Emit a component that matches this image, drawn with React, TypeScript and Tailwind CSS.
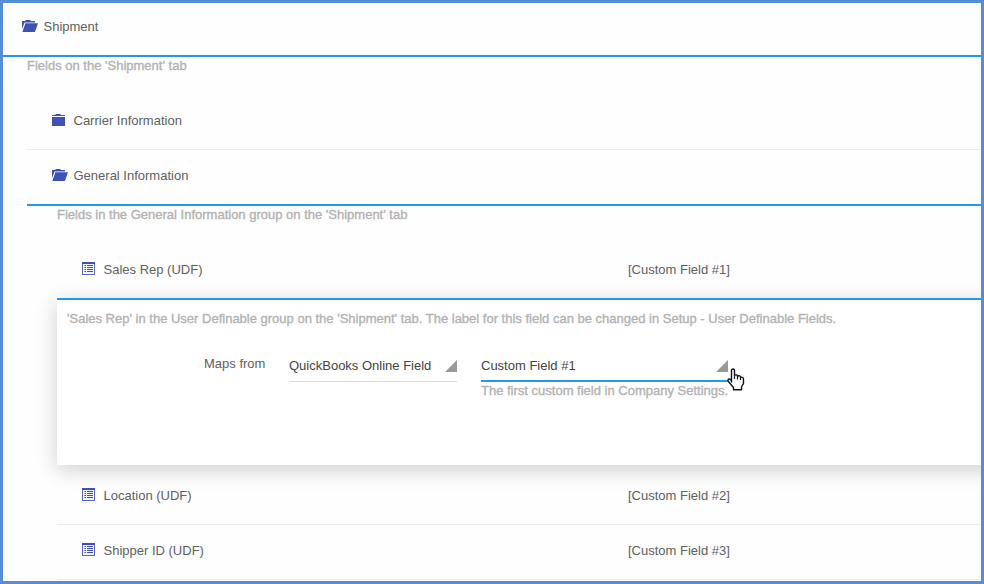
import React from "react";

function FolderOpen() {
  return (
    <svg width="16" height="12" viewBox="0 0 16 12" className="shrink-0" fill="#3f51b5">
      <path d="M0 1H3L4 0H8L9 1H13V2.4H2.6L0 9Z" />
      <path d="M3.4 3.2H16L12.9 12H0.4Z" />
    </svg>
  );
}

function FolderClosed() {
  return (
    <svg width="13" height="12" viewBox="0 0 13 12" className="shrink-0" fill="#3f51b5">
      <path d="M0 1H3L4 0H8L9 1H13V2H0Z" />
      <path d="M0 3H13V12H0Z" />
    </svg>
  );
}

function ListIcon() {
  return (
    <svg width="13" height="13" viewBox="0 0 13 13" className="shrink-0">
      <path d="M0 0H13V13H0Z" fill="#5b6bc3" />
      <path d="M0 0H13V2H0Z" fill="#3f51b5" />
      <path d="M1 2H12V12H1Z" fill="#f1f3fb" />
      <path d="M2.5 3.5H4M5 3.5H11M2.5 5.5H4M5 5.5H11M2.5 7.5H4M5 7.5H11M2.5 9.5H4M5 9.5H11" stroke="#3f51b5" strokeWidth="1" />
    </svg>
  );
}

function FieldRow({ label, value, className }: { label: string; value: string; className: string }) {
  return (
    <div className={`flex items-center pl-[25px] ${className}`}>
      <ListIcon />
      <span className="ml-[8.5px] w-[524.5px] pt-[3px]">{label}</span>
      <span className="pt-[3px]">{value}</span>
    </div>
  );
}

function Corner() {
  return (
    <svg width="12" height="12" viewBox="0 0 12 12" className="shrink-0">
      <path d="M12 0V12H0Z" fill="#999" />
    </svg>
  );
}

function Hand() {
  return (
    <svg width="18" height="23" viewBox="0 0 18 23" className="absolute left-[246px] top-[10px]">
      <path
        d="M4.5 14.5V2.6Q4.5 1 6 1Q7.5 1 7.5 2.6V7.2Q10.2 6.2 10.6 8Q13.2 7.2 13.6 9.2Q16.5 8.7 16.5 11.5V15.5L14.5 19V21.8H6.5V19.5L1.2 13.2Q0.6 11 2.3 11Q3.5 11.2 4.5 12.5"
        fill="#fff"
        stroke="#101020"
        strokeWidth="1.4"
        strokeLinejoin="round"
      />
      <path d="M7.5 7V11M10.5 8V11.5M13.5 9V12" stroke="#101020" strokeWidth="1.2" fill="none" />
    </svg>
  );
}

export default function App() {
  return (
    <div className="h-[584px] w-[984px] overflow-hidden border-[3px] border-[#558ed5] bg-[#fefefe] font-['Liberation_Sans',Arial,sans-serif] text-[13px] leading-4 text-[#606060]">
      <div className="flex h-[54px] items-center border-b-2 border-[#2196f3] pb-[6px] pl-[19px]">
        <FolderOpen />
        <span className="ml-[5.5px] pt-[2px]">Shipment</span>
      </div>
      <div className="pl-6">
        <p className="h-[34px] pt-px text-[#b2b2b2] [-webkit-text-stroke:0.35px_#b2b2b2]">Fields on the 'Shipment' tab</p>
        <div className="flex h-[59px] items-center border-b border-[#eee] pl-[25px]">
          <FolderClosed />
          <span className="ml-[8.5px] pt-[2px]">Carrier Information</span>
        </div>
        <div className="flex h-14 items-center border-b-2 border-[#2196f3] pb-1 pl-[25px]">
          <FolderOpen />
          <span className="ml-[5.5px] pt-[2px]">General Information</span>
        </div>
        <div className="pl-[30px]">
          <p className="h-[34px] pt-px text-[#b2b2b2] [-webkit-text-stroke:0.35px_#b2b2b2]">Fields in the General Information group on the 'Shipment' tab</p>
          <FieldRow label="Sales Rep (UDF)" value="[Custom Field #1]" className="h-[58px] pb-px" />
          <section className="-mr-8 h-[167px] border-t-2 border-[#2196f3] bg-white pl-[10px] pt-[11px] shadow-[0_5px_20px_rgba(0,0,0,0.19)]">
            <p className="text-[#b2b2b2] [-webkit-text-stroke:0.35px_#b2b2b2]">
              'Sales Rep' in the User Definable group on the 'Shipment' tab. The label for this field can be changed in Setup - User Definable Fields.
            </p>
            <div className="mt-[29px] flex items-start">
              <span className="w-[222px] pl-[137px]">Maps from</span>
              <div className="mt-[2px] flex h-6 w-[168px] justify-between border-b border-[#ddd] text-[#444]">
                <span>QuickBooks Online Field</span>
                <span className="pt-[2px]"><Corner /></span>
              </div>
              <div className="relative ml-6 mt-[2px] w-[247px]">
                <div className="flex h-6 justify-between border-b-2 border-[#2196f3] text-[#444]">
                  <span>Custom Field #1</span>
                  <span className="pt-[2px]"><Corner /></span>
                </div>
                <p className="whitespace-nowrap pt-px text-[#b2b2b2] [-webkit-text-stroke:0.35px_#b2b2b2]">The first custom field in Company Settings.</p>
                <Hand />
              </div>
            </div>
          </section>
          <FieldRow label="Location (UDF)" value="[Custom Field #2]" className="h-[60px] border-b border-[#eee]" />
          <FieldRow label="Shipper ID (UDF)" value="[Custom Field #3]" className="h-[55px] border-b border-[#eee] pb-[5px]" />
        </div>
      </div>
    </div>
  );
}
